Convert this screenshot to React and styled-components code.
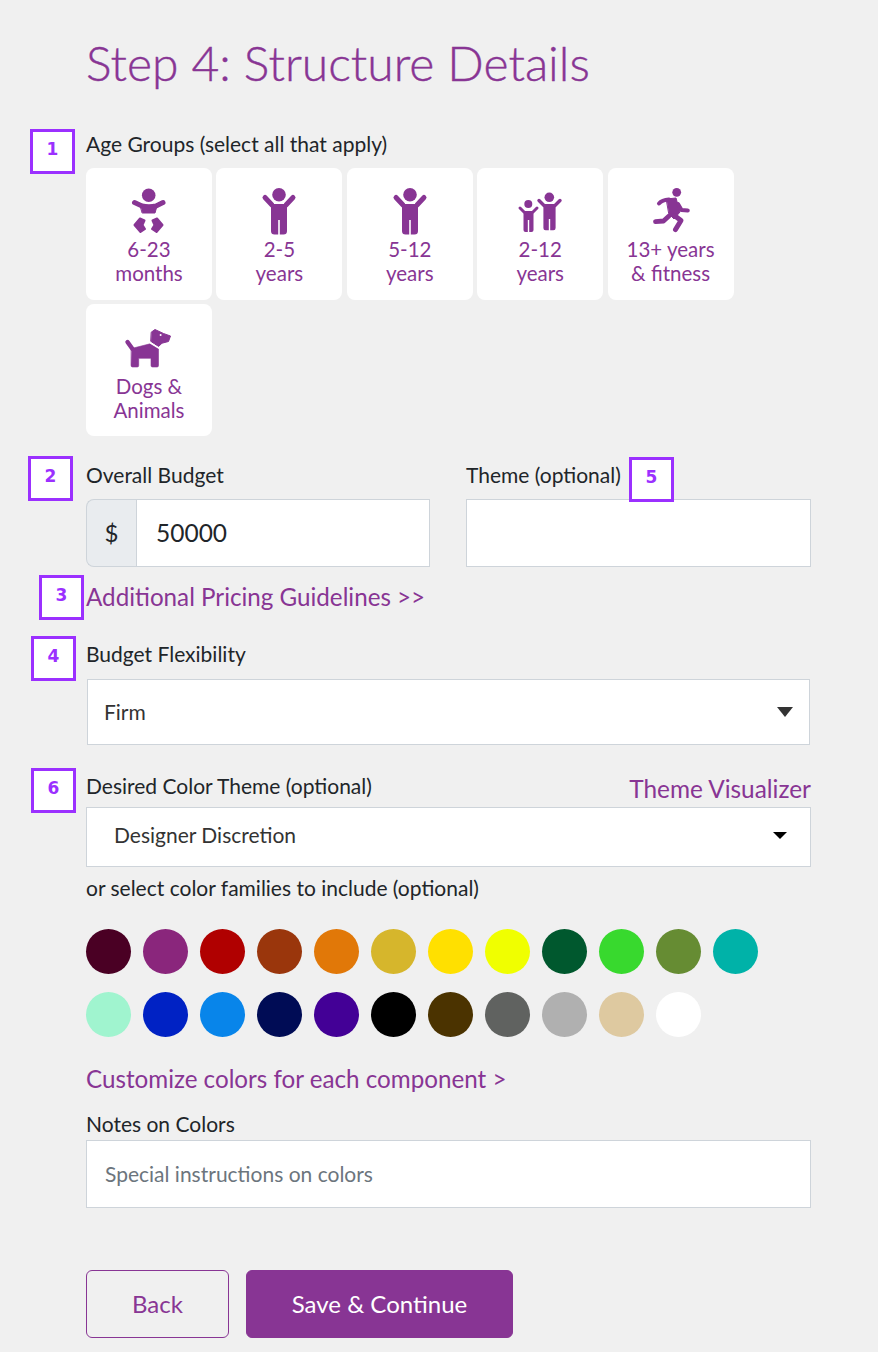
import React from 'react';
import styled, { createGlobalStyle } from 'styled-components';

const purple = '#883594';
const ink = '#212529';

const GlobalStyle = createGlobalStyle`
  html, body {
    margin: 0;
    padding: 0;
    background: #f0f0f0;
  }
  * {
    box-sizing: border-box;
  }
`;

const Page = styled.div`
  position: relative;
  width: 878px;
  height: 1352px;
  padding: 36px 67px 14px 86px;
  font-family: Lato, "Liberation Sans", sans-serif;
  color: ${ink};
  overflow: hidden;
`;

const Title = styled.h1`
  margin: 0 0 41px;
  padding-bottom: 2px;
  font-size: 48px;
  line-height: 54px;
  font-weight: 300;
  -webkit-text-stroke: 0.4px ${purple};
  color: ${purple};
`;

const Label = styled.div`
  font-size: 21px;
  line-height: 22px;
  padding-bottom: 2px;
  margin-top: ${props => props.$top || 0}px;
  margin-bottom: ${props => props.$bottom || 0}px;
`;

const CardGrid = styled.div`
  display: flex;
  flex-wrap: wrap;
  column-gap: 4.4px;
  row-gap: 4px;
  margin-bottom: 28px;
  width: 660px;
`;

const Card = styled.div`
  width: 126px;
  height: 132px;
  padding-top: 19px;
  background: #fff;
  border-radius: 8px;
  display: flex;
  flex-direction: column;
  align-items: center;
  color: ${purple};
  font-size: 20.5px;
  line-height: 24px;
  text-align: center;
`;

const CardIcon = styled.svg`
  width: 60px;
  height: 48px;
  margin-bottom: ${props => props.$gap || 2}px;
  fill: ${purple};
  stroke: ${purple};
  stroke-linecap: round;
  stroke-linejoin: round;
`;

const TwoCols = styled.div`
  display: grid;
  grid-template-columns: 344px 345px;
  column-gap: 36px;
`;

const InputGroup = styled.div`
  display: flex;
  height: 68px;
  margin-top: 11px;
`;

const Addon = styled.div`
  width: 50px;
  display: flex;
  align-items: center;
  justify-content: center;
  padding-bottom: 2px;
  background: #e9ecef;
  border: 1px solid #ced4da;
  border-right: 0;
  border-radius: 8px 0 0 8px;
  font-size: 24px;
`;

const TextInput = styled.input`
  flex: 1;
  min-width: 0;
  width: 100%;
  height: 68px;
  padding: 0 18px 2px;
  background: #fff;
  border: 1px solid #ced4da;
  border-radius: 0;
  outline: 0;
  font-family: inherit;
  font-size: ${props => props.$size || 24.5}px;
  color: ${ink};
  &::placeholder {
    color: #6c757d;
    opacity: 1;
  }
`;

const AmountInput = styled(TextInput)`
  padding-left: 19px;
`;

const TextLink = styled.a`
  display: block;
  color: ${purple};
  font-size: 24.2px;
  line-height: 28px;
  margin-top: ${props => props.$top || 0}px;
`;

const SelectBox = styled.div`
  display: flex;
  align-items: center;
  justify-content: space-between;
  background: #fff;
  border: 1px solid #ced4da;
  height: ${props => props.$height}px;
  margin: ${props => props.$margin};
  padding: ${props => props.$padding};
  font-size: 21px;
  color: #333;
`;

const SelectText = styled.span`
  padding-bottom: ${props => props.$lift}px;
`;

const Arrow = styled.span`
  width: 0;
  height: 0;
  border-left: ${props => props.$w}px solid transparent;
  border-right: ${props => props.$w}px solid transparent;
  border-top: ${props => props.$h}px solid ${props => props.$color};
`;

const SpaceRow = styled.div`
  display: flex;
  justify-content: space-between;
  align-items: flex-start;
  height: 24px;
  margin-top: 30px;
`;

const Visualizer = styled.a`
  color: ${purple};
  font-size: 24.4px;
  line-height: 28px;
`;

const SwatchGrid = styled.div`
  display: grid;
  grid-template-columns: repeat(12, 45px);
  column-gap: 12px;
  row-gap: 18px;
  margin-top: 28px;
`;

const Swatch = styled.span`
  width: 45px;
  height: 45px;
  border-radius: 50%;
  background: ${props => props.$color};
`;

const Actions = styled.div`
  display: flex;
  gap: 17px;
  margin-top: 62px;
`;

const Button = styled.button`
  height: 68px;
  width: ${props => props.$width}px;
  border-radius: 6px;
  border: 1px solid ${purple};
  background: ${props => (props.$primary ? purple : 'transparent')};
  color: ${props => (props.$primary ? '#fff' : purple)};
  font-family: inherit;
  font-size: 24px;
  padding: 0 0 2px;
`;

const Badge = styled.div`
  position: absolute;
  left: ${props => props.$x}px;
  top: ${props => props.$y}px;
  width: 45px;
  height: 45px;
  border: 3px solid #9b30ff;
  background: #fff;
  color: #9b30ff;
  display: flex;
  align-items: center;
  justify-content: center;
  padding-bottom: 6px;
  font-family: "DejaVu Sans", sans-serif;
  font-size: 17px;
  font-weight: 700;
`;

const BabyIcon = () => (
  <CardIcon viewBox="0 0 60 48">
    <circle cx="29.7" cy="8.3" r="6.8" stroke="none" />
    <path d="M15.5 15.5 L23 19 Q30 20.5 37 19 L44 15.5" fill="none" strokeWidth="5" />
    <path d="M21.5 19 H38 L36 26 H23.5 Z" strokeWidth="1" />
    <path d="M21 31.5 L25.5 33.5 L23.5 38 L26 42 L21.5 45 L15.5 38 Z" strokeWidth="2" />
    <path d="M38 31.5 L33.5 33.5 L35.5 38 L33 42 L37.5 45 L43.5 38 Z" strokeWidth="2" />
  </CardIcon>
);

const ChildIcon = () => (
  <CardIcon viewBox="0 0 60 48">
    <circle cx="30" cy="7.7" r="6.8" stroke="none" />
    <path d="M16 10.5 L23 18 M44 10.5 L37 18" fill="none" strokeWidth="5" />
    <path d="M22 17 H38 V44 Q38 47.5 34.5 47.5 H25.5 Q22 47.5 22 44 Z" stroke="none" />
    <path d="M30 33 V48" fill="none" stroke="#fff" strokeWidth="1.6" strokeLinecap="butt" />
  </CardIcon>
);

const SiblingsIcon = () => (
  <CardIcon viewBox="0 0 60 48">
    <circle cx="18.3" cy="17" r="4" stroke="none" />
    <path d="M10 21 L14 25 M27 21 L23 25" fill="none" strokeWidth="3" />
    <path d="M13.5 24 H23.5 V43 Q23.5 45 21.5 45 H15.5 Q13.5 45 13.5 43 Z" stroke="none" />
    <path d="M18.5 33 V46" fill="none" stroke="#fff" strokeWidth="1.4" strokeLinecap="butt" />
    <circle cx="39.3" cy="10.3" r="4.8" stroke="none" />
    <path d="M29 13.5 L34 18.5 M50 13.5 L45 18.5" fill="none" strokeWidth="3.4" />
    <path d="M33.4 17 H45.6 V41 Q45.6 43.2 43.4 43.2 H35.6 Q33.4 43.2 33.4 41 Z" stroke="none" />
    <path d="M39.5 32 V44" fill="none" stroke="#fff" strokeWidth="1.4" strokeLinecap="butt" />
  </CardIcon>
);

const RunnerIcon = () => (
  <CardIcon viewBox="0 0 60 48">
    <circle cx="35.7" cy="5.3" r="4.4" stroke="none" />
    <path d="M18 16.5 Q21 13 28 12.5" fill="none" strokeWidth="4" />
    <path d="M25.5 12 L35 11 L39 25 L33 32 L28 27 Z" strokeWidth="1" />
    <path d="M37 17 L40.5 23 L46.8 23.6" fill="none" strokeWidth="4" />
    <path d="M14.5 34.6 L22.5 34 L28 29" fill="none" strokeWidth="4.8" />
    <path d="M34 29 L40 33.5 L34.5 42.5" fill="none" strokeWidth="5" />
  </CardIcon>
);

const DogIcon = () => (
  <CardIcon viewBox="0 0 60 48" $gap={3}>
    <path d="M8.5 19 L13.5 26" fill="none" strokeWidth="4.4" />
    <path d="M12.5 25.5 L31 20.8 L39.5 26 V42.5 Q39.5 44 38 44 H33.5 Q32 44 32 42.5 V35.3 H19.7 V42.5 Q19.7 44 18.2 44 H13.5 Q12 44 12 42.5 Z" strokeWidth="0.6" />
    <path d="M32.5 9 L36 6.5 L44.5 10.5 L51.5 13 L49.5 18.5 L43 20.2 L39.5 23.5 L32 18.5 Z" strokeWidth="1" />
    <path d="M31 19.6 L39.8 25" fill="none" stroke="#fff" strokeWidth="1.3" strokeLinecap="butt" />
    <circle cx="41.6" cy="12" r="1" fill="#fff" stroke="none" />
  </CardIcon>
);

const ageGroups = [
  { icon: <BabyIcon />, lines: ['6-23', 'months'] },
  { icon: <ChildIcon />, lines: ['2-5', 'years'] },
  { icon: <ChildIcon />, lines: ['5-12', 'years'] },
  { icon: <SiblingsIcon />, lines: ['2-12', 'years'] },
  { icon: <RunnerIcon />, lines: ['13+ years', '& fitness'] },
  { icon: <DogIcon />, lines: ['Dogs &', 'Animals'] },
];

const swatches = [
  '#4a0024', '#8a267c', '#b00000', '#9a360c', '#e17808', '#d6b62c',
  '#ffe000', '#f0ff00', '#00582e', '#38d92e', '#668c33', '#00b2a8',
  '#a0f4cf', '#0022c4', '#0885ea', '#000c55', '#430096', '#000000',
  '#4b3300', '#606260', '#b0b0b0', '#dec9a0', '#ffffff',
];

const badges = [
  { n: 1, x: 30, y: 129 },
  { n: 2, x: 28, y: 456 },
  { n: 3, x: 39, y: 575 },
  { n: 4, x: 31, y: 636 },
  { n: 5, x: 629, y: 457 },
  { n: 6, x: 31, y: 768 },
];

export default function App() {
  return (
    <Page>
      <GlobalStyle />
      <Title>Step 4: Structure Details</Title>

      <Label $bottom={11}>Age Groups (select all that apply)</Label>
      <CardGrid>
        {ageGroups.map(group => (
          <Card key={group.lines.join()}>
            {group.icon}
            <div>{group.lines[0]}</div>
            <div>{group.lines[1]}</div>
          </Card>
        ))}
      </CardGrid>

      <TwoCols>
        <div>
          <Label>Overall Budget</Label>
          <InputGroup>
            <Addon>$</Addon>
            <AmountInput defaultValue="50000" />
          </InputGroup>
        </div>
        <div>
          <Label>Theme (optional)</Label>
          <InputGroup>
            <TextInput />
          </InputGroup>
        </div>
      </TwoCols>

      <TextLink $top={16}>Additional Pricing Guidelines &gt;&gt;</TextLink>

      <Label $top={32} $bottom={12}>Budget Flexibility</Label>
      <SelectBox $height={66} $margin="0 1px" $padding="0 16px 0 16px">
        <SelectText $lift={2}>Firm</SelectText>
        <Arrow $w={8} $h={10} $color="#333" />
      </SelectBox>

      <SpaceRow>
        <Label>Desired Color Theme (optional)</Label>
        <Visualizer>Theme Visualizer</Visualizer>
      </SpaceRow>
      <SelectBox $height={60} $margin="8px 0 0" $padding="0 23px 4px 27px">
        <SelectText $lift={2}>Designer Discretion</SelectText>
        <Arrow $w={7} $h={7} $color="#000" />
      </SelectBox>

      <Label $top={10}>or select color families to include (optional)</Label>

      <SwatchGrid>
        {swatches.map(color => <Swatch key={color} $color={color} />)}
      </SwatchGrid>

      <TextLink $top={28}>Customize colors for each component &gt;</TextLink>

      <Label $top={20} $bottom={3}>Notes on Colors</Label>
      <TextInput $size={21} placeholder="Special instructions on colors" />

      <Actions>
        <Button $width={143}>Back</Button>
        <Button $width={267} $primary>Save &amp; Continue</Button>
      </Actions>

      {badges.map(badge => (
        <Badge key={badge.n} $x={badge.x} $y={badge.y}>{badge.n}</Badge>
      ))}
    </Page>
  );
}
